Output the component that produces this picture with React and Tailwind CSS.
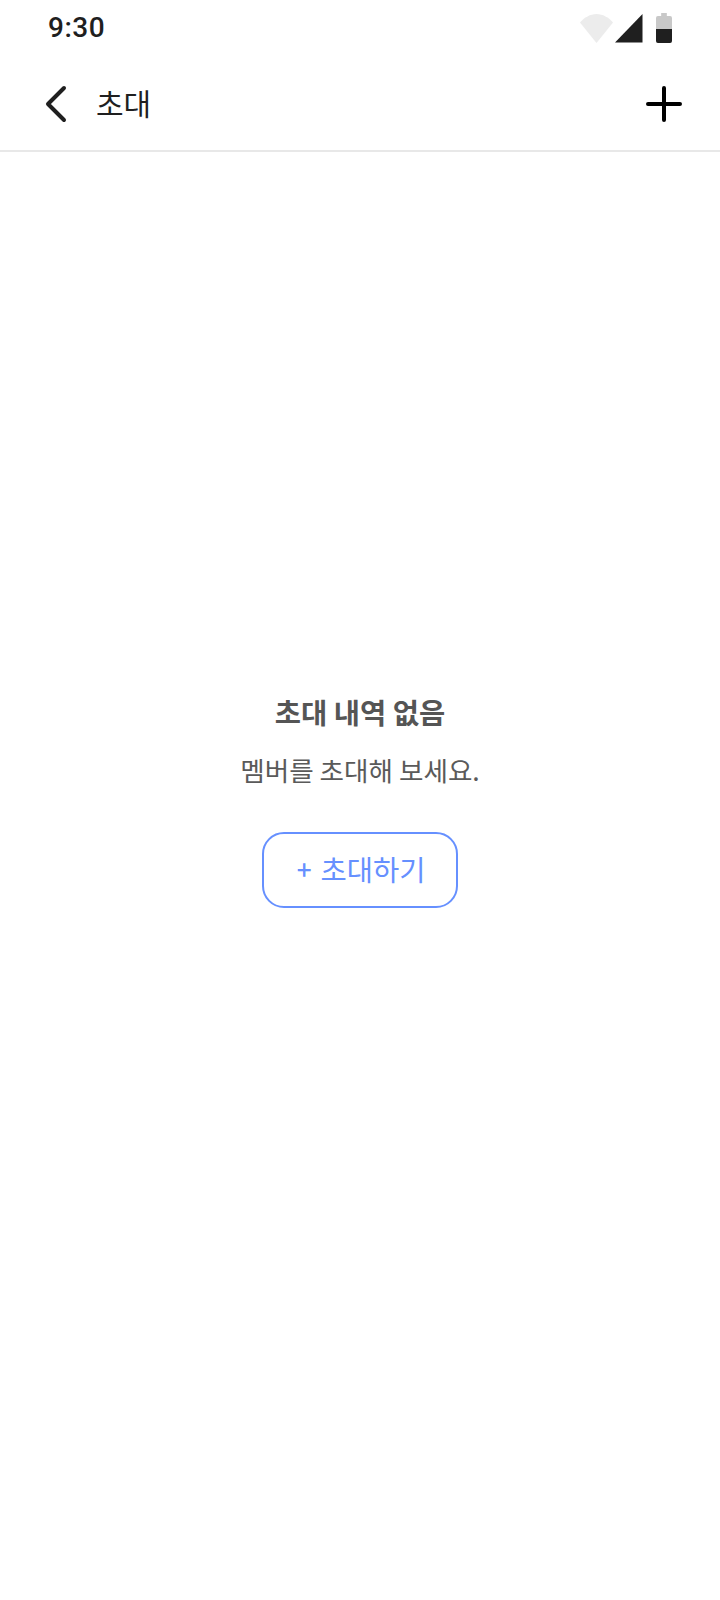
const cjk = "font-['Noto_Sans_CJK_KR','Noto_Sans',sans-serif]";

function StatusBar() {
  return (
    <div className="flex h-14 items-center justify-between pl-12 pr-[48px]">
      <span className="font-['Roboto',sans-serif] text-[28px] font-medium leading-none tracking-[0.5px] text-[#1f1f1f]">9:30</span>
      <div className="flex items-center">
        <svg width="33" height="29" viewBox="0 0 34 29" preserveAspectRatio="none">
          <path d="M0 8.500C4.500 3.500 10.500 0 17 0s12.500 3.500 17 8.500L17 29z" fill="#ececec" />
        </svg>
        <svg className="ml-[2px]" width="28" height="29" viewBox="0 0 29 29" preserveAspectRatio="none">
          <path d="M0 28.500 28.500 0v28.500z" fill="#1f1f1f" />
        </svg>
        <svg className="ml-[13px]" width="16" height="30" viewBox="0 0 17 30" preserveAspectRatio="none">
          <path d="M5.500 0h6v3H15a2 2 0 0 1 2 2v11H0V5a2 2 0 0 1 2-2h3.500z" fill="#c8c8c8" />
          <path d="M0 16h17v12a2 2 0 0 1-2 2H2a2 2 0 0 1-2-2z" fill="#1f1f1f" />
        </svg>
      </div>
    </div>
  );
}

function Header() {
  return (
    <div className="flex h-[96px] items-center justify-between border-b-2 border-[#e8e8e8] pl-[45px] pr-[38px]">
      <div className="flex items-center">
        <svg className="mt-[1px]" width="22" height="38" viewBox="0 0 22 38" fill="none">
          <path d="M19 3 3 19l16 16" stroke="#1f1f1f" strokeWidth="4" strokeLinecap="round" strokeLinejoin="round" />
        </svg>
        <span className={`${cjk} mb-[2px] ml-[29px] text-[30px] leading-none text-[#1f1f1f]`}>초대</span>
      </div>
      <svg className="mt-[1px]" width="36" height="36" viewBox="0 0 36 36" fill="none">
        <path d="M18 2v32M2 18h32" stroke="#000" strokeWidth="4" strokeLinecap="round" />
      </svg>
    </div>
  );
}

export default function App() {
  return (
    <div className={`${cjk} flex h-[1600px] w-[720px] flex-col overflow-hidden bg-white`}>
      <StatusBar />
      <Header />
      <main className="flex flex-col items-center pt-[540px]">
        <h2 className="text-[28.500px] font-bold leading-[40px] text-[#555555]">초대 내역 없음</h2>
        <p className="mt-[18px] text-[26.600px] leading-[40px] text-[#5a5a5a]">멤버를 초대해 보세요.</p>
        <button className="mt-[42px] flex h-[76px] w-[196px] items-center justify-center rounded-[22px] border-2 border-[#6690ff] pb-[2px] pl-[2px] leading-none text-[#6690ff]">
          <span className="mr-[9px] text-[26px] font-medium">+</span>
          <span className="text-[28.500px]">초대하기</span>
        </button>
      </main>
    </div>
  );
}
